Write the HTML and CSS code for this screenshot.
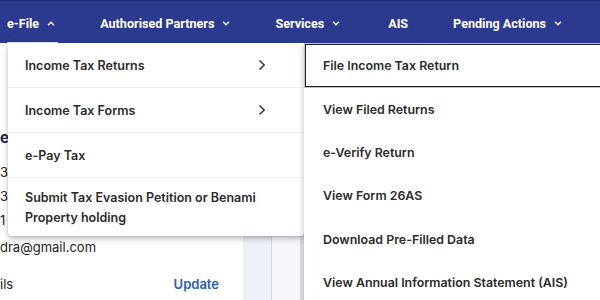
FILE: index.html
```html
<!DOCTYPE html>
<html>
<head>
<meta charset="utf-8">
<link rel="stylesheet" href="styles.css">
</head>
<body>
<div class="page">
  <nav class="nav">
    <div class="nav-item active">e-File <svg class="caret" width="8" height="5" viewBox="0 0 8 5"><path d="M1 4.2 L4 1.2 L7 4.2" fill="none" stroke="#fff" stroke-width="1.3"/></svg></div>
    <div class="nav-item">Authorised Partners <svg class="caret" width="8" height="5" viewBox="0 0 8 5"><path d="M1 0.8 L4 3.8 L7 0.8" fill="none" stroke="#fff" stroke-width="1.3"/></svg></div>
    <div class="nav-item">Services <svg class="caret" width="8" height="5" viewBox="0 0 8 5"><path d="M1 0.8 L4 3.8 L7 0.8" fill="none" stroke="#fff" stroke-width="1.3"/></svg></div>
    <div class="nav-item ais">AIS</div>
    <div class="nav-item">Pending Actions <svg class="caret" width="8" height="5" viewBox="0 0 8 5"><path d="M1 0.8 L4 3.8 L7 0.8" fill="none" stroke="#fff" stroke-width="1.3"/></svg></div>
  </nav>
  <main class="content">
    <section class="card">
      <div class="card-head">e</div>
      <div class="row">3</div>
      <div class="row">3</div>
      <div class="row">1</div>
      <div class="row email">dra@gmail.com</div>
      <div class="row last"><span>ils</span><span class="link">Update</span></div>
    </section>
    <div class="col-a"></div>
    <div class="col-b"></div>
  </main>

  <div class="menu">
    <div class="menu-item">Income Tax Returns <svg class="chev" width="8" height="12" viewBox="0 0 8 12"><path d="M1.5 1.5 L6.2 6 L1.5 10.5" fill="none" stroke="#333" stroke-width="1.5"/></svg></div>
    <div class="menu-item">Income Tax Forms <svg class="chev" width="8" height="12" viewBox="0 0 8 12"><path d="M1.5 1.5 L6.2 6 L1.5 10.5" fill="none" stroke="#333" stroke-width="1.5"/></svg></div>
    <div class="menu-item">e-Pay Tax</div>
    <div class="menu-item tall">Submit Tax Evasion Petition or Benami Property holding</div>
  </div>

  <div class="submenu">
    <div class="sub-item focus">File Income Tax Return</div>
    <div class="sub-item">View Filed Returns</div>
    <div class="sub-item">e-Verify Return</div>
    <div class="sub-item">View Form 26AS</div>
    <div class="sub-item">Download Pre-Filled Data</div>
    <div class="sub-item">View Annual Information Statement (AIS)</div>
  </div>
</div>
</body>
</html>
```
FILE: styles.css
```css
* { box-sizing: border-box; }
html, body { margin: 0; padding: 0; }
body {
  width: 600px;
  height: 300px;
  overflow: hidden;
  background: #f3f4f8;
  font-family: Inter, "Liberation Sans", Arial, sans-serif;
  color: #222;
}
.page { position: relative; width: 600px; height: 300px; overflow: hidden; }

.nav {
  height: 43px;
  background: #2b3a8e;
  border-top: 1px solid #1d2a72;
  display: flex;
  align-items: center;
  gap: 45px;
  padding: 2px 0 0 7px;
  font-family: Roboto, "Liberation Sans", Arial, sans-serif;
}
.nav-item {
  color: #fff;
  font-weight: 700;
  font-size: 12.6px;
  display: flex;
  align-items: center;
  height: 100%;
  white-space: nowrap;
  position: relative;
}
.nav-item .caret { margin-left: 8px; }
.nav-item.ais { margin-left: 3px; }
.active::after {
  content: "";
  position: absolute;
  left: 0;
  right: -3px;
  bottom: -1px;
  height: 2px;
  background: #e8ebf5;
}

.content {
  display: flex;
  height: 257px;
}
.card {
  width: 243px;
  background: #fff;
  font-size: 13px;
  color: #222;
  padding-top: 85px;
}
.card-head { font-weight: 700; font-size: 15px; line-height: 20px; margin-bottom: 12px; color: #1f2a5c; }
.row { height: 24px; line-height: 24px; }
.row.email { height: 30px; line-height: 30px; }
.row.last { height: 44px; line-height: 44px; display: flex; justify-content: space-between; padding-right: 24px; }
.link { color: #2a5bc8; font-weight: 600; }
.col-a { width: 29px; background: #eef0f8; border-right: 1px solid #d6d9e3; }
.col-b { width: 32px; background: #f7f8fb; border-right: 4px solid #dfe4f0; }

.menu {
  position: absolute;
  left: 8px;
  top: 43px;
  width: 296px;
  background: #fff;
  border-radius: 0 0 4px 4px;
  box-shadow: 0 3px 6px rgba(0,0,0,0.22), 0 1px 3px rgba(0,0,0,0.12);
}
.menu-item {
  height: 45px;
  display: flex;
  align-items: center;
  justify-content: space-between;
  padding: 0 38px 0 17px;
  font-size: 12.5px;
  font-weight: 600;
  color: #2b2b2b;
  border-bottom: 1px solid #eeeeee;
}
.menu-item.tall {
  height: 58px;
  border-bottom: none;
  line-height: 20px;
  padding-right: 30px;
  padding-top: 2px;
}
.chev { flex: none; }

.submenu {
  position: absolute;
  left: 304px;
  top: 43px;
  width: 300px;
  height: 270px;
  padding-top: 1px;
  background: #fff;
  box-shadow: -2px 2px 5px rgba(0,0,0,0.15);
}
.sub-item {
  height: 43.4px;
  display: flex;
  align-items: center;
  padding-left: 19px;
  font-size: 12.4px;
  font-weight: 600;
  color: #2b2b2b;
}
.sub-item.focus {
  margin-left: 1px;
  border: 1.5px solid #222;
  outline: 1.5px solid #aac4ec;
  padding-left: 17px;
}
```
